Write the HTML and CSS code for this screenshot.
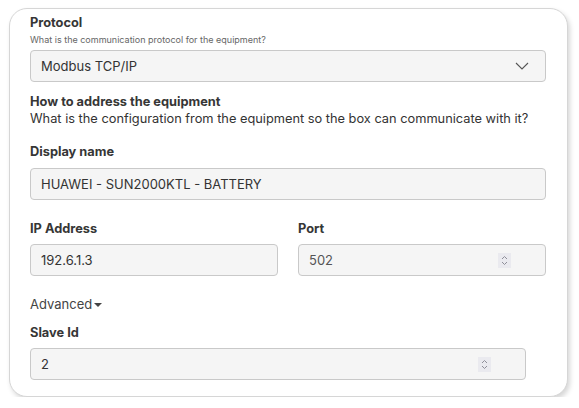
FILE: index.html
```html
<!DOCTYPE html>
<html lang="en">
<head>
<meta charset="utf-8">
<title>Equipment protocol</title>
<link rel="stylesheet" href="styles.css">
</head>
<body>
<div class="card">
  <div class="label">Protocol</div>
  <div class="hint">What is the communication protocol for the equipment?</div>
  <div class="field select">
    <span>Modbus TCP/IP</span>
    <svg class="chev" width="14" height="8" viewBox="0 0 14 8"><path d="M1 1 L7 7 L13 1" fill="none" stroke="#555" stroke-width="1.1"/></svg>
  </div>

  <div class="label section">How to address the equipment</div>
  <div class="desc">What is the configuration from the equipment so the box can communicate with it?</div>

  <div class="group first">
    <div class="label">Display name</div>
    <div class="field"><span>HUAWEI - SUN2000KTL - BATTERY</span></div>
  </div>

  <div class="row">
    <div class="group">
      <div class="label">IP Address</div>
      <div class="field"><span>192.6.1.3</span></div>
    </div>
    <div class="group">
      <div class="label">Port</div>
      <div class="field num"><span class="muted">502</span><span class="spin"><svg width="7" height="11" viewBox="0 0 7 11"><path d="M1 4 L3.5 1.5 L6 4 M1 7 L3.5 9.5 L6 7" fill="none" stroke="#8f8f99" stroke-width="1"/></svg></span></div>
    </div>
  </div>

  <div class="adv">Advanced<span class="caret"></span></div>

  <div class="group slave">
    <div class="label">Slave Id</div>
    <div class="field num"><span>2</span><span class="spin"><svg width="7" height="11" viewBox="0 0 7 11"><path d="M1 4 L3.5 1.5 L6 4 M1 7 L3.5 9.5 L6 7" fill="none" stroke="#8f8f99" stroke-width="1"/></svg></span></div>
  </div>
</div>
</body>
</html>
```
FILE: styles.css
```css
* { box-sizing: border-box; }
html, body { margin: 0; padding: 0; background: #fff; }
body {
  font-family: Inter, "Noto Sans", sans-serif;
  color: #333;
  padding: 8px 0 0 9px;
}
.card {
  width: 559px;
  height: 389px;
  border: 1px solid #d6d6d6;
  border-radius: 18px;
  box-shadow: 2px 3px 5px rgba(0,0,0,0.16);
  padding: 5px 21px 0 20px;
  background: #fff;
}
.label {
  font-size: 12.8px;
  font-weight: 700;
  line-height: 17px;
  color: #363636;
}
.hint {
  font-size: 9px;
  line-height: 12px;
  color: #666;
  margin-top: 3px;
  margin-bottom: 4px;
}
.field {
  height: 32px;
  border: 1px solid #c9c9c9;
  border-radius: 4px;
  background: #f5f5f5;
  display: flex;
  align-items: center;
  justify-content: space-between;
  padding: 0 10px;
  font-size: 13px;
  color: #333;
}
.select { padding-right: 16px; }
.chev { display: block; }
.section { margin-top: 11px; }
.desc {
  font-size: 12.8px;
  line-height: 18px;
  color: #333;
}
.group { display: flex; flex-direction: column; gap: 7px; }
.group.first { margin-top: 15px; gap: 8px; }
.row {
  display: grid;
  grid-template-columns: 1fr 1fr;
  gap: 20px;
  margin-top: 20px;
}
.num { padding-right: 34px; }
.muted { color: #555; }
.spin {
  width: 13px;
  height: 15px;
  background: #eaeaef;
  display: flex;
  align-items: center;
  justify-content: center;
}
.spin svg { display: block; }
.adv {
  margin-top: 20px;
  font-size: 13px;
  line-height: 17px;
  color: #444;
  display: flex;
  align-items: center;
}
.caret {
  width: 0;
  height: 0;
  border-left: 4px solid transparent;
  border-right: 4px solid transparent;
  border-top: 4.5px solid #444;
  margin-left: 2px;
  margin-top: 1px;
}
.slave { margin-top: 11px; width: 496px; gap: 7px; }
```
